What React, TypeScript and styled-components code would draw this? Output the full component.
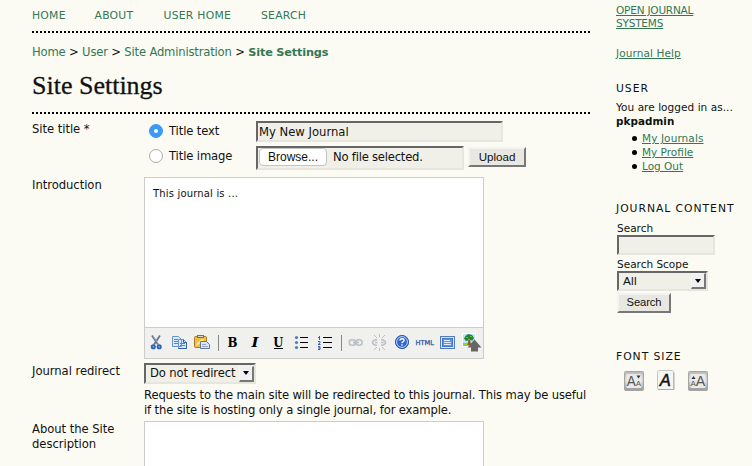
import React from "react";
import styled, { createGlobalStyle } from "styled-components";

const sans = '"DejaVu Sans", Verdana, sans-serif';
const green = "#337755";

const GlobalStyle = createGlobalStyle`
  * { box-sizing: border-box; }
  html, body { margin: 0; height: 466px; overflow: hidden; background: #fbfbf3; }
  body { font: 11.6px/15px ${sans}; color: #111; }
`;

const Page = styled.div`
  display: flex;
  gap: 26px;
  height: 466px;
  padding-left: 32px;
  overflow: hidden;
`;
const Main = styled.main`width: 558px; flex: none;`;
const Nav = styled.nav`
  display: flex;
  height: 31px;
  padding-top: 8px;
  gap: 29px;
`;
const NavLink = styled.a<{ $w: number }>`
  width: ${(p) => p.$w}px;
  flex: none;
  white-space: nowrap;
  color: ${green};
  font-size: 10.8px;
  letter-spacing: 0.25px;
`;
const Rule = styled.div`
  height: 2px;
  background: repeating-linear-gradient(to right, #000 0 2px, transparent 2px 4px);
`;
const Crumbs = styled.div`
  padding-top: 12px;
  height: 37px;
  white-space: nowrap;
  letter-spacing: -0.18px;
`;
const Crumb = styled.a<{ $current?: boolean }>`
  color: ${green};
  font-weight: ${(p) => (p.$current ? 700 : 400)};
  font-size: ${(p) => (p.$current ? "11.3px" : "inherit")};
`;
const Title = styled.h1`
  margin: 0;
  height: 42px;
  font: 400 26px/32px "Liberation Serif", Georgia, serif;
  -webkit-text-stroke: 0.3px #111;
  white-space: nowrap;
`;
const Row = styled.div<{ $h: number; $top?: number }>`
  display: grid;
  grid-template-columns: 112px 446px;
  height: ${(p) => p.$h}px;
  padding-top: ${(p) => p.$top ?? 0}px;
`;
const Label = styled.div`
  padding-top: 1px;
  letter-spacing: -0.04px;
`;
const Choice = styled.div<{ $h: number }>`
  display: flex;
  height: ${(p) => p.$h}px;
  align-items: flex-start;
`;
const ChoiceLabel = styled.label`
  display: flex;
  width: 112px;
  padding: 3px 0 0 5px;
  gap: 6px;
  white-space: nowrap;
  letter-spacing: -0.12px;
`;
const Radio = styled.span<{ $on?: boolean }>`
  display: grid;
  place-items: center;
  width: 14px;
  height: 14px;
  border-radius: 50%;
  border: 1px solid ${(p) => (p.$on ? "#3b99fc" : "#aaa")};
  background: ${(p) => (p.$on ? "#3b99fc" : "#fff")};
  &::after {
    content: "";
    width: 4px;
    height: 4px;
    border-radius: 50%;
    background: #fff;
  }
`;
const Inset = styled.div<{ $w: number; $h: number; $drop?: number }>`
  display: flex;
  align-items: center;
  width: ${(p) => p.$w}px;
  height: ${(p) => p.$h}px;
  padding-left: 1px;
  padding-top: ${(p) => p.$drop ?? 0}px;
  border: 2px solid;
  border-color: #666 #e6e6de #e6e6de #666;
  background: #f0f0e8;
  white-space: nowrap;
`;
const FileInset = styled(Inset)`
  align-items: flex-start;
  letter-spacing: -0.22px;
  line-height: 19px;
`;
const Browse = styled.span`
  display: grid;
  place-items: center;
  width: 68px;
  height: 18px;
  margin-right: 6px;
  border: 1px solid #c4c4c4;
  border-radius: 4px;
  background: #fff;
  font: 12px/14px "Liberation Sans", Arial, sans-serif;
  letter-spacing: 0;
`;
const Button = styled.button<{ $w: number }>`
  display: block;
  width: ${(p) => p.$w}px;
  height: 20px;
  padding: 0 0 1px;
  border: 2px solid;
  border-color: #f3f3f3 #777 #777 #f3f3f3;
  background: #e8e8e0;
  color: #111;
  font: 11.6px/15px "Liberation Sans", Arial, sans-serif;
`;
const SearchButton = styled(Button)`
  margin-top: 2px;
  font-size: 11.2px;
  letter-spacing: -0.1px;
`;
const FileRow = styled.div`
  display: flex;
  gap: 4px;
  & > button { margin-top: 1px; }
`;
const Editor = styled.div<{ $h: number }>`
  display: flex;
  flex-direction: column;
  width: 340px;
  height: ${(p) => p.$h}px;
  border: 1px solid #ccc;
  background: #fff;
`;
const EditorBody = styled.div`
  flex: 1;
  padding: 8px;
  font-size: 10px;
  letter-spacing: 0.17px;
`;
const Toolbar = styled.div`
  height: 31px;
  border-top: 1px solid #ccc;
  background: #f0f0ee;
`;
const Hint = styled.p`
  margin: 4px 0 0;
  white-space: nowrap;
  letter-spacing: -0.14px;
`;
const SelectBox = styled(Inset)<{ $sans?: boolean }>`
  justify-content: space-between;
  padding-left: 4px;
  letter-spacing: -0.12px;
  ${(p) => p.$sans && 'font-family: "Liberation Sans", Arial, sans-serif; font-size: 11.8px; letter-spacing: 0.2px;'}
`;
const Arrow = styled.span`
  display: grid;
  place-items: center;
  width: 15px;
  height: 16px;
  border: 1px solid;
  border-color: #f5f5f5 #777 #777 #f5f5f5;
  border-right-width: 2px;
  border-bottom-width: 2px;
  background: #f0f0f0;
  &::after {
    content: "";
    border: 3px solid transparent;
    border-top: 4px solid #000;
    border-bottom: 0;
  }
`;

const Side = styled.aside`
  width: 136px;
  flex: none;
  font-size: 10.5px;
  line-height: 14px;
  white-space: nowrap;
`;
const SideLink = styled.a<{ $spacing?: number }>`
  color: ${green};
  text-decoration: underline;
  text-underline-offset: 1px;
  letter-spacing: ${(p) => p.$spacing ?? 0}px;
`;
const Block = styled.section<{ $h: number; $top?: number }>`
  height: ${(p) => p.$h}px;
  padding-top: ${(p) => p.$top ?? 0}px;
  line-height: ${(p) => (p.$top ? "13px" : "14px")};
`;
const Heading = styled.h2`
  margin: 0;
  padding-top: 1px;
  font: 400 10.8px/14px ${sans};
  letter-spacing: 0.95px;
`;
const UserInfo = styled.div`
  margin-top: 4px;
  letter-spacing: 0.05px;
  b { font-size: 10.4px; }
`;
const Links = styled.ul`
  margin: 3px 0 0;
  padding-left: 26px;
  list-style: none;
`;
const LinkItem = styled.li`
  display: flex;
  align-items: center;
  height: 14px;
  &::before {
    content: "";
    width: 5px;
    height: 5px;
    margin: 0 5px 0 -10px;
    border-radius: 50%;
    background: #000;
  }
`;
const SearchForm = styled.div`
  padding: 5px 0 0 1px;
`;
const ScopeLabel = styled.div`margin-top: 2px;`;
const FontButtons = styled.div`
  display: flex;
  padding: 6px 0 0 8px;
`;

const ToolbarIcons = () => (
  <svg width="338" height="30" viewBox="145 328 338 30">
    <g fill="none" stroke="#68778c" strokeWidth="1.8">
      <path d="M152 335.500l6 9M160 335.500l-6 9" />
      <path stroke="#9fb1c8" strokeWidth=".7" d="M152.500 335l6 9" />
      <g stroke="#2861b5" strokeWidth="1.9"><circle cx="153.300" cy="346.800" r="1.600" /><circle cx="159.200" cy="346.800" r="1.600" /></g>
    </g>
    <g fill="#d9eaff" stroke="#6794d1">
      <path d="M172.500 336.500h6l3 3v7h-9zM178.500 339.500h5l3 3v6h-8z" />
      <path stroke="#5086d2" d="M174 339.500h4M174 341.500h4M174 343.500h4M180 343.500h5M180 345.500h5" />
      <path stroke="#3460a5" d="M183.500 339.500v3h3v6h-8" fill="none" />
    </g>
    <g>
      <rect x="194.500" y="336.500" width="12" height="11" rx="1" fill="#eebd42" stroke="#a77b27" />
      <path d="M196.500 345l7-6" stroke="#ffe68a" strokeWidth="2" />
      <rect x="197.500" y="335.500" width="6" height="2" fill="#dad7d5" stroke="#776e64" />
      <path d="M200.500 341.500h6l3 3v4h-9z" fill="#d9e5f4" stroke="#64799a" />
      <path d="M202 344.500h4M202 346.500h6" stroke="#98a9c5" />
    </g>
    <path d="M218.500 335v16M341.500 335v16" stroke="#888" />
    <g fontFamily="DejaVu Serif, serif" fontWeight="700" fontSize="12">
      <text x="227.500" y="347" textLength="10" lengthAdjust="spacingAndGlyphs">B</text>
      <text x="251.500" y="347" fontStyle="italic" textLength="7" lengthAdjust="spacingAndGlyphs">I</text>
      <text x="273.200" y="346.500" textLength="10" lengthAdjust="spacingAndGlyphs">U</text>
    </g>
    <path d="M274 348.500h9M300 337.500h8M300 342.500h8M300 347.500h8M323 337.500h9M323 342.500h9M323 347.500h9" stroke="#000" />
    <g fill="#527bc1"><circle cx="296.500" cy="337.500" r="1.600" /><circle cx="296.500" cy="342.500" r="1.600" /><circle cx="296.500" cy="347.500" r="1.600" /></g>
    <path d="M318 337.500h1.500v-1.500v4M318 341.500h2v1.500l-2 1.500h2.500M318 346.500h2v3h-2M318 348h2" fill="none" stroke="#3761b5" />
    <g fill="none" stroke="#bbc0c7" strokeWidth="1.600">
      <rect x="349.300" y="339.800" width="6" height="5.500" rx="2.500" /><rect x="356" y="339.800" width="6" height="5.500" rx="2.500" /><path d="M353 342.500h6" />
      <path d="M377 339.800h-1.500q-3 1-3 2.700t3 2.800h1.500M381 339.800h1.500q3 1 3 2.700t-3 2.800h-1.500M375 342.500h2.500M381 342.500h2.500" />
      <path strokeWidth="1" d="M374 335l3 3M379.500 334v3M385 335l-3 3M374 350l3-3M379.500 351v-3M385 350l-3-3" />
    </g>
    <circle cx="402" cy="342" r="6.600" fill="#2f66cc" stroke="#315ca8" /><circle cx="402" cy="342" r="5.400" fill="none" stroke="#bed7fb" />
    <path d="M400 340.500q0-1.800 2-1.800t2 1.700q0 1-1.100 1.500-.9.400-.9 1.300M402 344.300v1.500" fill="none" stroke="#fff" strokeWidth="1.400" />
    <text x="415.500" y="345" fontFamily="DejaVu Sans, sans-serif" fontSize="6.600" fill="#2352a0" stroke="#2352a0" strokeWidth=".25" textLength="18.500">HTML</text>
    <rect x="440.500" y="336.500" width="14" height="12" fill="#d5e8ff" stroke="#547cb7" />
    <rect x="442.500" y="338.500" width="10" height="8" fill="#5d93e9" stroke="#3f78d2" />
    <path d="M444 340.500h6M444 342.500h7M444 344.500h7" stroke="#e0efff" />
    <rect x="462.500" y="333.500" width="13" height="13" fill="#b8e5ff" stroke="#fff" />
    <path d="M463 343h12v3h-12z" fill="#91d529" />
    <path d="M468.500 339l-1 6h3.500l-1-6" fill="#925920" />
    <path d="M464 338.500l1.500-2.500 2.500-2 4 1 2 3-1.500 2.500-3-.5-3.500 1z" fill="#26822c" />
    <path d="M466 337.500h2M470 336.500h2M468 339.500h2" stroke="#78b53b" />
    <path d="M474.500 339.500l7 8h-3.500v4h-7v-4h-3.500z" fill="#666" />
  </svg>
);

const FontIcons = () => (
  <svg width="86" height="22" viewBox="624 370 86 22">
    <defs>
      <linearGradient id="metal" x2="0" y2="1">
        <stop stopColor="#b8b8b6" />
        <stop offset=".45" stopColor="#ddd" />
        <stop offset="1" stopColor="#999" />
      </linearGradient>
    </defs>
    <g fill="url(#metal)" stroke="#a6a6a4">
      <rect x="624.500" y="371.500" width="19" height="19" rx="1" />
      <rect x="688.500" y="371.500" width="19" height="19" rx="1" />
    </g>
    <g fill="#eaeae8"><rect x="626.500" y="374" width="15" height="14" rx="1" /><rect x="690.500" y="374" width="15" height="14" rx="1" /></g>
    <rect x="657.500" y="370.500" width="16" height="19" rx="1" fill="#f5f5f3" stroke="#c6c6c4" />
    <path d="M658 389.500h16v-17" fill="none" stroke="#aaa" />
    <g fontFamily="Liberation Sans, sans-serif" fill="#555">
      <text x="626.800" y="386" fontSize="14" textLength="9" lengthAdjust="spacingAndGlyphs">A</text>
      <text x="635.800" y="386" fontSize="8">A</text>
      <text x="695.800" y="386" fontSize="14" textLength="9.500" lengthAdjust="spacingAndGlyphs">A</text>
      <text x="690.500" y="386" fontSize="8">A</text>
      <text x="659.800" y="386" fontSize="16.500" fontStyle="italic" fill="#111" stroke="#111" strokeWidth=".5">A</text>
    </g>
    <path d="M636.500 375.500h4l-2 3zM691.500 379h4l-2-3z" fill="#333" />
  </svg>
);

export default function App() {
  return (
    <>
      <GlobalStyle />
      <Page>
        <Main>
          <Nav>
            <NavLink $w={33.5}>HOME</NavLink>
            <NavLink $w={40}>ABOUT</NavLink>
            <NavLink $w={68.5}>USER HOME</NavLink>
            <NavLink $w={46}>SEARCH</NavLink>
          </Nav>
          <Rule />
          <Crumbs>
            <Crumb>Home</Crumb> &gt; <Crumb>User</Crumb> &gt; <Crumb>Site Administration</Crumb> &gt; <Crumb $current>Site Settings</Crumb>
          </Crumbs>
          <Title>Site Settings</Title>
          <Rule />
          <Row $h={63} $top={7}>
            <Label>Site title *</Label>
            <div>
              <Choice $h={25}>
                <ChoiceLabel><Radio $on />Title text</ChoiceLabel>
                <Inset $w={247} $h={21} $drop={1}>My New Journal</Inset>
              </Choice>
              <Choice $h={31}>
                <ChoiceLabel><Radio />Title image</ChoiceLabel>
                <FileRow>
                  <FileInset $w={208} $h={24}><Browse>Browse...</Browse>No file selected.</FileInset>
                  <Button $w={58}>Upload</Button>
                </FileRow>
              </Choice>
            </div>
          </Row>
          <Row $h={186}>
            <Label>Introduction</Label>
            <Editor $h={182}>
              <EditorBody>This journal is ...</EditorBody>
              <Toolbar><ToolbarIcons /></Toolbar>
            </Editor>
          </Row>
          <Row $h={58}>
            <Label>Journal redirect</Label>
            <div>
              <SelectBox $w={112} $h={21}>Do not redirect<Arrow /></SelectBox>
              <Hint>
                Requests to the main site will be redirected to this journal. This may be useful<br />
                if the site is hosting only a single journal, for example.
              </Hint>
            </div>
          </Row>
          <Row $h={60}>
            <Label>About the Site<br />description</Label>
            <Editor $h={60} />
          </Row>
        </Main>
        <Side>
          <Block $h={46} $top={4}>
            <SideLink $spacing={-0.2}>OPEN JOURNAL</SideLink><br /><SideLink $spacing={-0.2}>SYSTEMS</SideLink>
          </Block>
          <Block $h={35}><SideLink $spacing={0.1}>Journal Help</SideLink></Block>
          <Block $h={120}>
            <Heading>USER</Heading>
            <UserInfo>You are logged in as...<br /><b>pkpadmin</b></UserInfo>
            <Links>
              <LinkItem><SideLink $spacing={0.1}>My Journals</SideLink></LinkItem>
              <LinkItem><SideLink>My Profile</SideLink></LinkItem>
              <LinkItem><SideLink>Log Out</SideLink></LinkItem>
            </Links>
          </Block>
          <Block $h={148}>
            <Heading>JOURNAL CONTENT</Heading>
            <SearchForm>
              Search
              <Inset $w={98} $h={20} />
              <ScopeLabel>Search Scope</ScopeLabel>
              <SelectBox $sans $w={91} $h={20}>All<Arrow /></SelectBox>
              <SearchButton $w={54}>Search</SearchButton>
            </SearchForm>
          </Block>
          <Heading>FONT SIZE</Heading>
          <FontButtons><FontIcons /></FontButtons>
        </Side>
      </Page>
    </>
  );
}
